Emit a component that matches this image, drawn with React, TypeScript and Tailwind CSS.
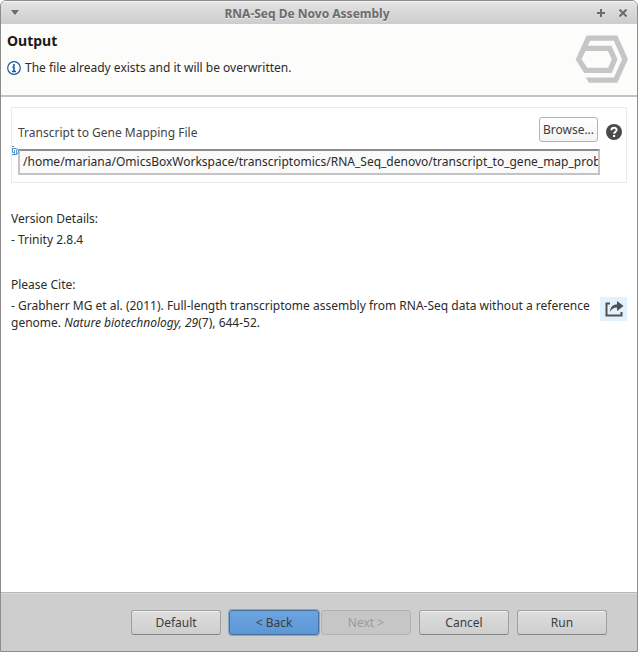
import type { ButtonHTMLAttributes } from "react"
import { clsx } from "clsx"

function OmicsLogo() {
  return (
    <svg width="54" height="50" viewBox="15 15 162 150" fill="none" aria-hidden="true">
      <path
        d="M57 150.500H137L165 88L137 24.500H55L26 88L47 121H120L134 88L119 55H44"
        stroke="#c6c6c6"
        strokeWidth="16"
      />
      <path d="M47 142.500h12v16h-2z" fill="#c6c6c6" />
    </svg>
  )
}

function InfoIcon() {
  return (
    <svg width="14" height="14" viewBox="0 0 14 14" fill="none" aria-hidden="true">
      <circle cx="7" cy="7" r="6.3" fill="#fff" stroke="#1c5aa0" strokeWidth="1.2" />
      <path d="M7 3v2M5.3 6H7v4.5M5 10.5h4" stroke="#1c5aa0" strokeWidth="1.6" />
    </svg>
  )
}

function HelpIcon() {
  return (
    <svg width="16" height="16" viewBox="0 0 16 16" fill="none" aria-hidden="true">
      <circle cx="8" cy="8" r="8" fill="#4b4b4b" />
      <path d="M5.4 6.2c0-3.4 5.2-3.3 5.2-.3 0 1.8-2.5 1.8-2.5 3.8" stroke="#fff" strokeWidth="2" />
      <path d="M7 11h2.2v2H7z" fill="#fff" />
    </svg>
  )
}

// small info marker, clipped by the edge of the group
function FieldDecoration() {
  return (
    <svg width="7" height="10" viewBox="0 0 7 10" fill="none" aria-hidden="true">
      <path d="M0 .5h2M0 2.500h4Q6.500 3 6.500 5.500T4 8.500H0" stroke="#4b8ac4" />
      <path d="M.5 2.500v4h2M2.500 4v4.500M4.500 4v4" stroke="#5e98cc" />
    </svg>
  )
}

function ShareIcon() {
  return (
    <svg width="20" height="18" viewBox="0 0 20 18" fill="none" aria-hidden="true">
      <path d="M6 3.5H2.500v12h15V12" stroke="#505050" strokeWidth="2" />
      <path d="M6 12c.3-5 2.500-7.500 7-7.500V1l6.500 5-6.500 5V7.500C9.500 7.500 7.500 9 6 12z" fill="#505050" />
    </svg>
  )
}

interface DialogButtonProps extends ButtonHTMLAttributes<HTMLButtonElement> {
  primary?: boolean
}

function DialogButton({ primary, disabled, ...props }: DialogButtonProps) {
  return (
    <button
      type="button"
      disabled={disabled}
      className={clsx(
        "h-[25px] w-[90px] rounded-[3px] border text-xs",
        primary && "border-[#48709c] bg-linear-to-b from-[#6ca4e0] to-[#5c97d6] text-[#3c3c3c] ring-1 ring-[#8ba6c2]",
        disabled && "border-[#b2b2b2] bg-[#c6c6c6] text-[#9a9a9a]",
        !primary &&
          !disabled &&
          "border-[#a0a0a0] border-b-[#858585] bg-linear-to-b from-[#dedede] to-[#cecece] text-[#3c3c3c] inset-shadow-[0_1px_0_#f2f2f2]",
      )}
      {...props}
    />
  )
}

export default function App() {
  return (
    <div className="flex min-h-screen flex-col overflow-hidden rounded-t-md border border-[#8c8c8c] bg-white font-['Noto_Sans',sans-serif] text-xs text-[#2b2b2b]">
      <div className="flex h-[23px] items-center bg-linear-to-b from-[#e4e4e4] to-[#cdcdcd] px-2 inset-shadow-[0_1px_0_#f4f4f4]">
        <button type="button" aria-label="Window menu" className="flex w-6 pl-[2px]">
          <svg width="8" height="5" viewBox="0 0 8 5" aria-hidden="true">
            <path d="M0 0h8L4 5z" fill="#6b6b6b" />
          </svg>
        </button>
        <h1 className="flex-1 pt-[2px] text-center font-bold text-[#6b6b6b] text-shadow-[0_1px_0_#eeeeee]">
          RNA-Seq De Novo Assembly
        </h1>
        <div className="flex w-12 justify-end gap-[14px] pr-[2px]">
          <button type="button" aria-label="Maximize">
            <svg width="8" height="8" viewBox="0 0 8 8" aria-hidden="true">
              <path d="M4 0v8M0 4h8" stroke="#6b6b6b" strokeWidth="2" />
            </svg>
          </button>
          <button type="button" aria-label="Close">
            <svg width="8" height="8" viewBox="0 0 8 8" aria-hidden="true">
              <path d="M0.500 0.500l7 7M7.500 0.500l-7 7" stroke="#6b6b6b" strokeWidth="2" />
            </svg>
          </button>
        </div>
      </div>

      <header className="flex h-[73px] justify-between border-b-2 border-[#c4c4c4] bg-[#fcfcfb] pt-[7px] pr-2 pl-[6px]">
        <div>
          <h2 className="text-sm leading-5 font-bold text-[#1a1a1a]">Output</h2>
          <p className="mt-[9px] flex items-center gap-1 leading-4">
            <InfoIcon />
            The file already exists and it will be overwritten.
          </p>
        </div>
        <div className="pt-1">
          <OmicsLogo />
        </div>
      </header>

      <main className="flex-1 p-[10px]">
        <section className="relative h-[76px] border border-[#ebebeb] pt-[9px] pr-1 pl-[6px]">
          <div className="flex items-start">
            <label htmlFor="mapping-file" className="flex-1 pt-2 leading-4 text-[#444444]">
              Transcript to Gene Mapping File
            </label>
            <button
              type="button"
              className="h-[25px] w-[59px] rounded-[3px] border border-[#b4b4b4] bg-linear-to-b from-white to-[#f4f4f4] text-[#3c3c3c]"
            >
              Browse...
            </button>
            <button type="button" aria-label="Help" className="ml-2 pt-[7px]">
              <HelpIcon />
            </button>
          </div>
          <div className="mt-[7px] pr-[22px]">
            <input
              id="mapping-file"
              type="text"
              defaultValue="/home/mariana/OmicsBoxWorkspace/transcriptomics/RNA_Seq_denovo/transcript_to_gene_map_problem.txt"
              className="block h-[26px] w-full border-2 border-[#c4c4c4] border-t-[#8c8c8c] bg-[#fafafa] pb-[2px] pl-[3px] outline-none"
            />
          </div>
          <span className="absolute top-[38px] left-0">
            <FieldDecoration />
          </span>
        </section>

        <section className="pt-[27px] leading-[17px]">
          <p className="pb-1">Version Details:</p>
          <p>- Trinity 2.8.4</p>
        </section>

        <section className="pt-7 leading-[17px]">
          <p className="pb-1">Please Cite:</p>
          <div className="flex items-start justify-between">
            <p className="flex-1 pr-1">
              - Grabherr MG et al. (2011). Full-length transcriptome assembly from RNA-Seq data without a reference
              genome. <i>Nature biotechnology, 29</i>(7), 644-52.
            </p>
            <button
              type="button"
              aria-label="Open reference"
              className="flex h-6 w-[27px] items-center justify-center bg-[#e3f1fc]"
            >
              <ShareIcon />
            </button>
          </div>
        </section>
      </main>

      <footer className="flex h-[59px] items-start justify-end border-t border-[#b8b8b8] bg-[#cecece] pt-[17px] pr-[30px] inset-shadow-[0_1px_0_#dadada]">
        <div className="flex gap-2">
          <DialogButton>Default</DialogButton>
          <div className="flex gap-[2px]">
            <DialogButton primary>&lt; Back</DialogButton>
            <DialogButton disabled>Next &gt;</DialogButton>
          </div>
          <DialogButton>Cancel</DialogButton>
          <DialogButton>Run</DialogButton>
        </div>
      </footer>
    </div>
  )
}
